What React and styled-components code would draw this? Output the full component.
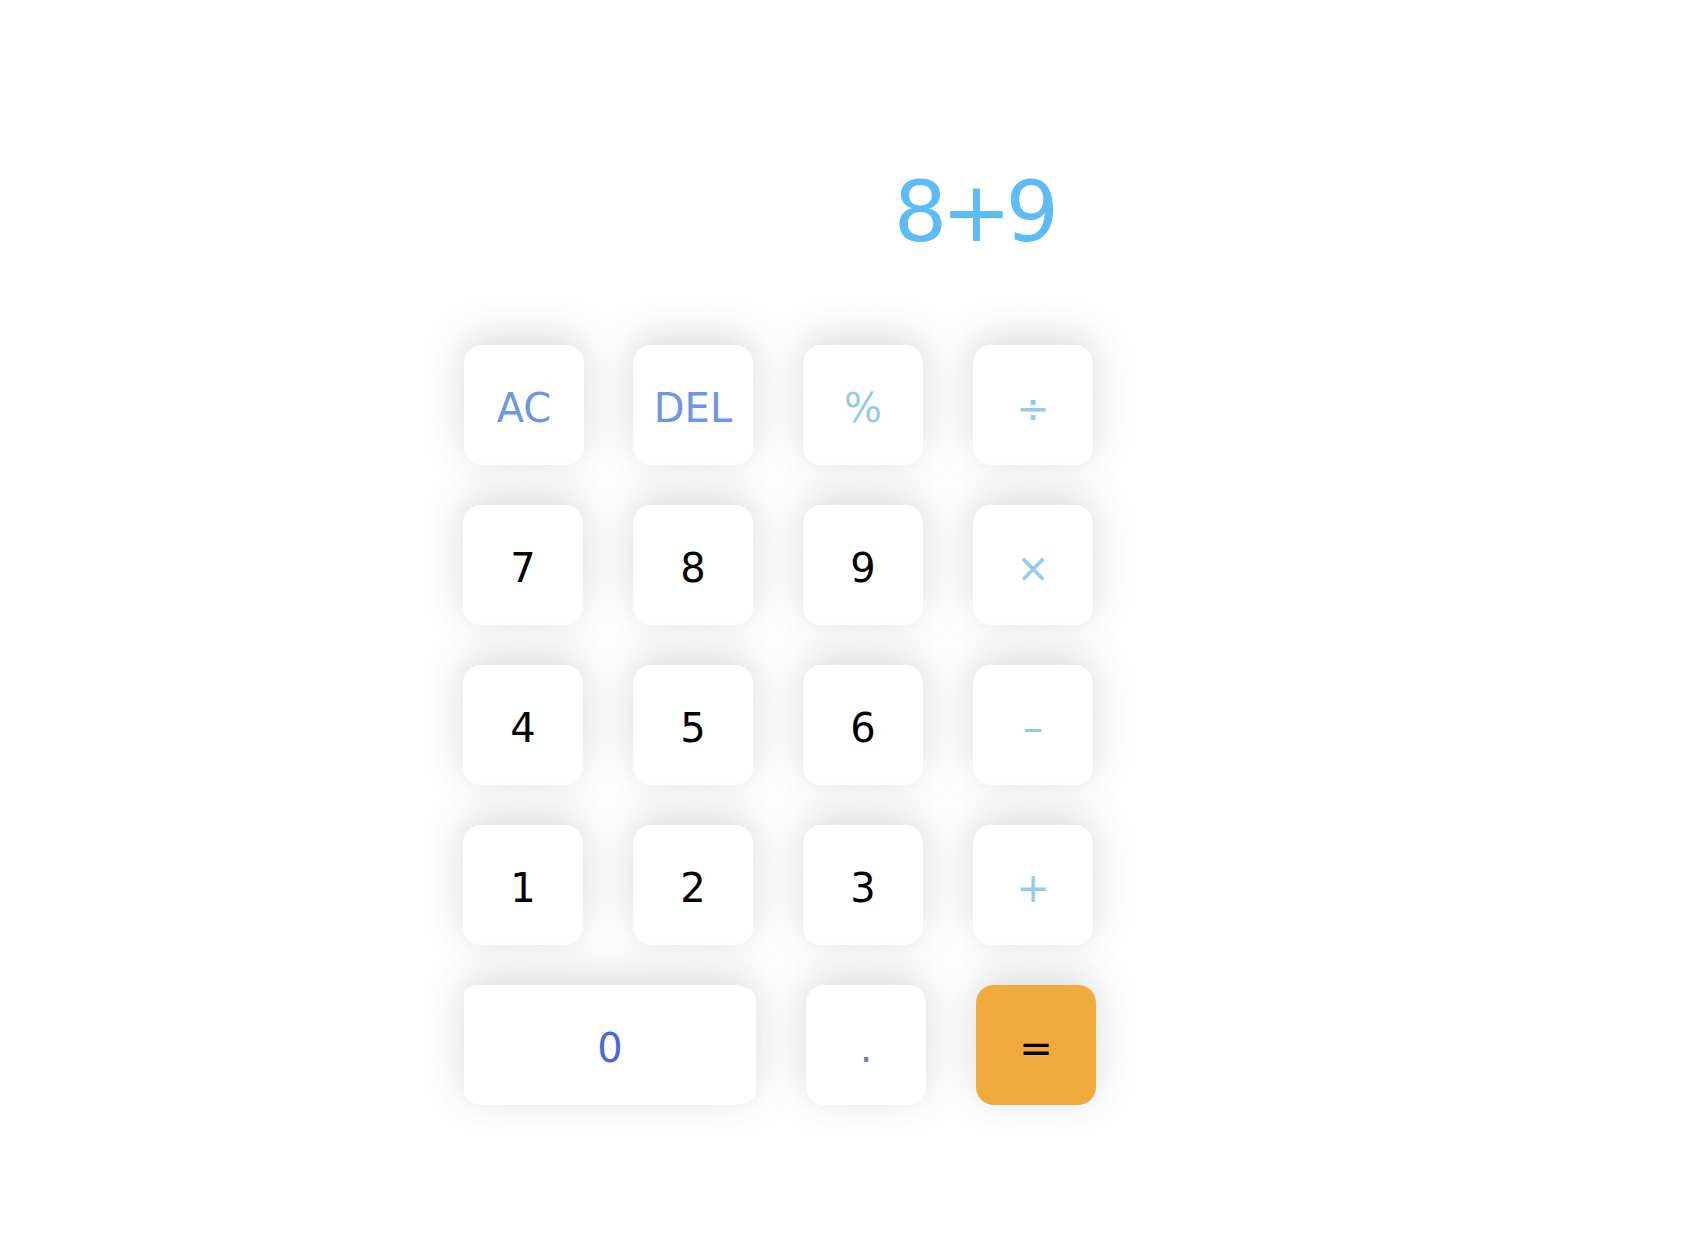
import React from "react";
import styled, { createGlobalStyle } from "styled-components";

const GlobalStyle = createGlobalStyle`
  html, body {
    margin: 0;
    padding: 0;
    background: #ffffff;
  }
  body {
    font-family: "DejaVu Sans", "Liberation Sans", sans-serif;
  }
`;

const Page = styled.div`
  width: 1688px;
  min-height: 1252px;
  box-sizing: border-box;
  padding: 170px 0 0 464px;
`;

const Calculator = styled.div`
  width: 633px;
  display: flex;
  flex-direction: column;
`;

const Display = styled.div`
  height: 84px;
  line-height: 84px;
  font-size: 84px;
  letter-spacing: -6px;
  color: #5bbcf7;
  text-align: right;
  padding-right: 44px;
  margin-bottom: 91px;
  white-space: nowrap;
`;

const Keypad = styled.div`
  display: grid;
  grid-template-columns: repeat(4, 120px);
  column-gap: 50px;
  row-gap: 40px;
`;

const BottomRow = styled.div`
  display: flex;
  gap: 51px;
  margin-top: 40px;
`;

const Key = styled.button`
  width: ${(p) => (p.$wide ? "292px" : "120px")};
  height: 120px;
  box-sizing: border-box;
  border: none;
  padding: 6px 0 0;
  margin: 0;
  background: ${(p) => (p.$accent ? "#f0a93c" : "#ffffff")};
  color: ${(p) => p.$color || "#000000"};
  border-radius: ${(p) =>
    p.$wide ? "14px 24px 24px 20px / 9px 13px 13px 13px" : "18px"};
  box-shadow: 0 -8px 40px rgba(90, 100, 100, 0.24);
  font-family: "DejaVu Sans", "Liberation Sans", sans-serif;
  font-size: 40px;
  line-height: 1;
  display: flex;
  align-items: center;
  justify-content: center;
  cursor: pointer;

  & + & {
    margin-left: ${(p) => (p.$shift ? "-1px" : "0")};
  }
`;

const FUNC = "#6e96e6";
const OP = "#94cbea";

const keys = [
  { label: "AC", color: FUNC },
  { label: "DEL", color: FUNC },
  { label: "%", color: OP },
  { label: "÷", color: OP },
  { label: "7" },
  { label: "8" },
  { label: "9" },
  { label: "×", color: OP },
  { label: "4" },
  { label: "5" },
  { label: "6" },
  { label: "–", color: OP },
  { label: "1" },
  { label: "2" },
  { label: "3" },
  { label: "+", color: OP },
];

export default function App() {
  return (
    <>
      <GlobalStyle />
      <Page>
        <Calculator>
          <Display>8+9</Display>
          <Keypad>
            {keys.map((k) => (
              <Key key={k.label} $color={k.color}>
                {k.label}
              </Key>
            ))}
          </Keypad>
          <BottomRow>
            <Key $wide $color="#4a67de">0</Key>
            <Key $color="#5a86c4">.</Key>
            <Key $accent $shift>=</Key>
          </BottomRow>
        </Calculator>
      </Page>
    </>
  );
}
